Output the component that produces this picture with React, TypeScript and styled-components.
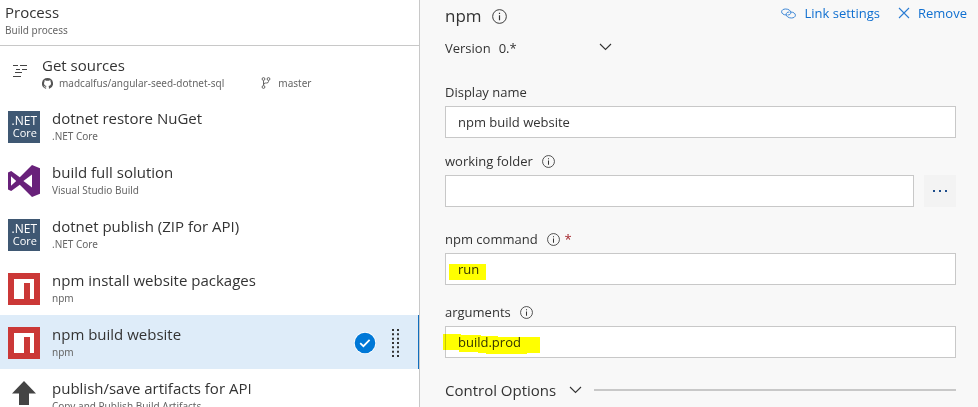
import React from "react";
import styled, { createGlobalStyle } from "styled-components";

const GlobalStyle = createGlobalStyle`
  * { box-sizing: border-box; }
  body { margin: 0; font-family: "Open Sans", "Noto Sans", sans-serif; color: #333; background: #f8f8f8; }
  button, input, select { font: inherit; color: inherit; }
  svg { display: block; flex: none; }
`;

const Layout = styled.div`
  display: grid;
  grid-template-columns: 70fr 93fr;
  height: 100vh;
  overflow: hidden;
`;

const Sidebar = styled.aside`
  background: #fff;
  border-right: 1px solid #c8c8c8;
  overflow: hidden;
`;

const ProcessHeader = styled.header`
  padding: 2px 5px 7px;
  border-bottom: 1px solid #c8c8c8;
`;

const Title = styled.div`
  font-size: 15px;
  line-height: 20px;
  color: #333;
  white-space: nowrap;
`;

const Subtitle = styled.div`
  display: flex;
  align-items: center;
  font-family: "Noto Sans", sans-serif;
  font-size: 10px;
  line-height: 16px;
  color: #666;
  white-space: nowrap;
`;

const Sources = styled.section`
  display: flex;
  gap: 14px;
  padding: 9px 12px 8px;
`;

const SourceIcon = styled.div`
  padding-top: 9px;
`;

const RepoName = styled.span`
  margin: 0 37px 0 6px;
`;

const BranchName = styled.span`
  margin-left: 7px;
`;

const TaskList = styled.ul`
  list-style: none;
  margin: 0;
  padding: 0;
`;

const TaskRow = styled.li<{ $selected?: boolean }>`
  display: flex;
  align-items: center;
  gap: 12px;
  height: 54px;
  padding: 1px 19px 0 8px;
  background: ${(p) => (p.$selected ? "#deecf9" : "#fff")};
  border-right: ${(p) => (p.$selected ? "1px solid #106ebe" : "0")};
`;

const TaskText = styled.div`
  flex: 1;
  min-width: 0;
  padding-bottom: 2px;
`;

const RowTools = styled.div`
  display: flex;
  align-items: center;
  gap: 16px;
`;

const NetBadge = styled.div`
  display: flex;
  flex-direction: column;
  align-items: flex-end;
  justify-content: center;
  width: 32px;
  height: 32px;
  padding-right: 3px;
  background: #3f5873;
  color: #fff;
  line-height: 12px;
`;

const NetName = styled.span`
  font-size: 12px;
`;

const NetCore = styled.span`
  font-size: 11px;
`;

const Details = styled.main`
  min-width: 0;
  padding: 4px 22px 0 25px;
`;

const DetailsHeader = styled.header`
  display: flex;
  align-items: center;
  justify-content: space-between;
  height: 24px;
  margin-right: -11px;
`;

const Heading = styled.h1`
  display: flex;
  align-items: center;
  gap: 10px;
  margin: 0;
  font-size: 17px;
  line-height: 24px;
  font-weight: 400;
`;

const Actions = styled.div`
  display: flex;
  gap: 18px;
  height: 24px;
  padding-bottom: 6px;
`;

const LinkButton = styled.button`
  display: flex;
  align-items: center;
  gap: 8px;
  padding: 0;
  border: 0;
  background: none;
  color: #0f6fd0;
  font-size: 13px;
  line-height: 18px;
  cursor: pointer;
`;

const VersionRow = styled.div`
  display: flex;
  align-items: center;
  gap: 8px;
  margin: 10px 0 24px;
  font-size: 13px;
  line-height: 20px;
`;

const SelectBox = styled.div`
  position: relative;
  width: 113px;
  svg { position: absolute; right: 0; top: 5px; pointer-events: none; }
`;

const Select = styled.select`
  display: block;
  appearance: none;
  width: 100%;
  height: 20px;
  padding: 0;
  border: 0;
  background: none;
`;

const Field = styled.div<{ $gap: number }>`
  margin-bottom: ${(p) => p.$gap}px;
`;

const LabelRow = styled.div`
  display: flex;
  align-items: center;
  gap: 9px;
  margin-bottom: 4px;
  font-size: 13px;
  line-height: 20px;
`;

const Required = styled.span`
  margin-left: -4px;
  color: #a4262c;
`;

const InputLine = styled.div`
  display: flex;
  gap: 10px;
`;

const InputWrap = styled.div`
  position: relative;
  flex: 1;
  min-width: 0;
`;

const TextInput = styled.input`
  display: block;
  width: 100%;
  height: 32px;
  padding: 0 12px;
  border: 1px solid #c8c8c8;
  border-radius: 0;
  background: #fff;
  font-size: 13px;
`;

const Marker = styled.svg`
  position: absolute;
  left: -2px;
  top: 8px;
  mix-blend-mode: multiply;
  pointer-events: none;
`;

const BrowseButton = styled.button`
  display: flex;
  align-items: center;
  justify-content: center;
  width: 32px;
  height: 32px;
  padding: 0;
  border: 0;
  background: #f3f3f3;
`;

const OptionsRow = styled.div`
  display: flex;
  align-items: center;
  gap: 12px;
`;

const OptionsButton = styled.button`
  display: flex;
  align-items: center;
  gap: 13px;
  padding: 0;
  border: 0;
  background: none;
  font-size: 15px;
  line-height: 24px;
`;

const Rule = styled.div`
  flex: 1;
  height: 2px;
  background: #c8c8c8;
`;

const InfoIcon = ({ size = 13 }: { size?: number }) => (
  <svg width={size} height={size} viewBox="0 0 14 14" fill="none" stroke="#333" strokeWidth=".9">
    <circle cx="7" cy="7" r="6.4" />
    <path d="M7 5.8V10.5M7 3.4V4.6" strokeWidth="1.1" />
  </svg>
);

const Chevron = () => (
  <svg width="13" height="8" viewBox="0 0 13 8" fill="none" stroke="#333" strokeWidth="1.1">
    <path d="M1 1L6.5 6.5L12 1" />
  </svg>
);

const SourcesIcon = () => (
  <svg width="16" height="13" viewBox="0 0 16 13" stroke="#444" strokeWidth="1">
    <path d="M1 1.5H6M8 1.5H15M4 5.5H8M10 5.5H15M3 8.5H10M1 12.5H9" />
  </svg>
);

const GithubIcon = () => (
  <svg width="11" height="11" viewBox="0 0 16 16" fill="#555">
    <path d="M8 0a8 8 0 0 0-2.53 15.59c.4.07.55-.17.55-.38v-1.49c-2.01.37-2.53-.49-2.69-.94-.09-.23-.48-.94-.82-1.13-.28-.15-.68-.52-.01-.53.63-.01 1.08.58 1.23.82.72 1.21 1.87.87 2.33.66.07-.52.28-.87.51-1.07-1.78-.2-3.64-.89-3.64-3.95 0-.87.31-1.59.82-2.15-.08-.2-.36-1.02.08-2.12 0 0 .67-.21 2.2.82a7.6 7.6 0 0 1 4 0c1.53-1.04 2.2-.82 2.2-.82.44 1.1.16 1.92.08 2.12.51.56.82 1.27.82 2.15 0 3.07-1.87 3.75-3.65 3.95.29.25.54.73.54 1.48v2.2c0 .21.15.46.55.38A8 8 0 0 0 8 0Z" />
  </svg>
);

const BranchIcon = () => (
  <svg width="10" height="12" viewBox="0 0 10 12" fill="none" stroke="#666" strokeWidth="1">
    <circle cx="2.5" cy="2" r="1.4" />
    <circle cx="7.5" cy="2" r="1.4" />
    <circle cx="2.5" cy="10" r="1.4" />
    <path d="M2.5 3.5V8.5M7.5 3.5V4.5Q7.5 6 5.5 6H4.5Q2.5 6 2.5 8" />
  </svg>
);

const VisualStudioIcon = () => (
  <svg width="32" height="32" viewBox="0 0 32 32">
    <path fill="#68217a" fillRule="evenodd" d="M24 0L32 3.3V28.7L24 32L11.8 19.8L3.2 26L0 24.5V7.5L3.2 6L11.8 12.2ZM24 9.4L15.4 16L24 22.6ZM3 11.3V20.7L8.2 16Z" />
  </svg>
);

const NpmIcon = () => (
  <svg width="32" height="32" viewBox="0 0 32 32">
    <path fill="#cb3837" d="M0 0H32V32H0Z" />
    <path fill="#fff" d="M6 6H26V26H22V10H16V26H6Z" />
  </svg>
);

const PublishIcon = () => (
  <svg width="32" height="32" viewBox="0 0 32 32">
    <path fill="#444" d="M16 0L28 12.5H21V24H11V12.5H4Z" />
  </svg>
);

const NetIcon = () => (
  <NetBadge>
    <NetName>.NET</NetName>
    <NetCore>Core</NetCore>
  </NetBadge>
);

const CheckIcon = () => (
  <svg width="22" height="22" viewBox="0 0 22 22">
    <circle cx="11" cy="11" r="11" fill="#fff" />
    <circle cx="11" cy="11" r="10.3" fill="#0078d7" />
    <path d="M6.2 11.2L9.4 14.2L15.6 7.8" fill="none" stroke="#fff" strokeWidth="1.7" />
  </svg>
);

const GripIcon = () => (
  <svg width="7" height="28" viewBox="0 0 7 28" stroke="#333" strokeWidth="2" strokeDasharray="2 2.33">
    <path d="M1 0V28M6 0V28" />
  </svg>
);

const LinkIcon = () => (
  <svg width="15" height="11" viewBox="0 0 15 11" fill="none" stroke="#2b7cd3" strokeWidth=".9">
    <path d="M5.6 7C2.6 7 .6 5.6.6 3.8C.6 2.2 2.2 1 4.6 1C7.6 1 9.8 2.6 9.8 4.6C9.8 6.2 8.4 7.2 6.6 6.9" />
    <path d="M9.4 4C12.4 4 14.4 5.4 14.4 7.2C14.4 8.8 12.8 10 10.4 10C7.4 10 5.2 8.4 5.2 6.4C5.2 4.8 6.6 3.8 8.4 4.1" />
  </svg>
);

const CloseIcon = () => (
  <svg width="12" height="12" viewBox="0 0 12 12" stroke="#2b7cd3" strokeWidth="1.1">
    <path d="M1 1L11 11M11 1L1 11" />
  </svg>
);

const DotsIcon = () => (
  <svg width="14" height="2" viewBox="0 0 14 2" fill="#1f4e8c">
    <path d="M0 0H2V2H0ZM6 0H8V2H6ZM12 0H14V2H12Z" />
  </svg>
);

const tasks = [
  { title: "dotnet restore NuGet", kind: ".NET Core", Icon: NetIcon },
  { title: "build full solution", kind: "Visual Studio Build", Icon: VisualStudioIcon },
  { title: "dotnet publish (ZIP for API)", kind: ".NET Core", Icon: NetIcon },
  { title: "npm install website packages", kind: "npm", Icon: NpmIcon },
  { title: "npm build website", kind: "npm", Icon: NpmIcon, selected: true },
  { title: "publish/save artifacts for API", kind: "Copy and Publish Build Artifacts", Icon: PublishIcon },
];

export default function App() {
  return (
    <>
      <GlobalStyle />
      <Layout>
        <Sidebar>
          <ProcessHeader>
            <Title>Process</Title>
            <Subtitle>Build process</Subtitle>
          </ProcessHeader>
          <Sources>
            <SourceIcon>
              <SourcesIcon />
            </SourceIcon>
            <div>
              <Title>Get sources</Title>
              <Subtitle>
                <GithubIcon />
                <RepoName>madcalfus/angular-seed-dotnet-sql</RepoName>
                <BranchIcon />
                <BranchName>master</BranchName>
              </Subtitle>
            </div>
          </Sources>
          <TaskList>
            {tasks.map(({ title, kind, Icon, selected }) => (
              <TaskRow key={title} $selected={selected}>
                <Icon />
                <TaskText>
                  <Title>{title}</Title>
                  <Subtitle>{kind}</Subtitle>
                </TaskText>
                {selected && (
                  <RowTools>
                    <CheckIcon />
                    <GripIcon />
                  </RowTools>
                )}
              </TaskRow>
            ))}
          </TaskList>
        </Sidebar>
        <Details>
          <DetailsHeader>
            <Heading>
              npm <InfoIcon size={15} />
            </Heading>
            <Actions>
              <LinkButton type="button">
                <LinkIcon />
                Link settings
              </LinkButton>
              <LinkButton type="button">
                <CloseIcon />
                Remove
              </LinkButton>
            </Actions>
          </DetailsHeader>
          <VersionRow>
            <label htmlFor="version">Version</label>
            <SelectBox>
              <Select id="version" defaultValue="0">
                <option value="0">0.*</option>
              </Select>
              <Chevron />
            </SelectBox>
          </VersionRow>
          <Field $gap={13}>
            <LabelRow>
              <label htmlFor="display-name">Display name</label>
            </LabelRow>
            <TextInput id="display-name" defaultValue="npm build website" />
          </Field>
          <Field $gap={22}>
            <LabelRow>
              <label htmlFor="folder">working folder</label>
              <InfoIcon />
            </LabelRow>
            <InputLine>
              <InputWrap>
                <TextInput id="folder" />
              </InputWrap>
              <BrowseButton type="button" aria-label="Browse">
                <DotsIcon />
              </BrowseButton>
            </InputLine>
          </Field>
          <Field $gap={17}>
            <LabelRow>
              <label htmlFor="command">npm command</label>
              <InfoIcon />
              <Required>*</Required>
            </LabelRow>
            <InputWrap>
              <TextInput id="command" defaultValue="run" required />
              <Marker width="97" height="20" viewBox="0 0 97 20">
                <path fill="#ff0" d="M6 3H43V19H6Z" />
              </Marker>
            </InputWrap>
          </Field>
          <Field $gap={20}>
            <LabelRow>
              <label htmlFor="arguments">arguments</label>
              <InfoIcon />
            </LabelRow>
            <InputWrap>
              <TextInput id="arguments" defaultValue="build.prod" />
              <Marker width="97" height="20" viewBox="0 0 97 20">
                <path fill="#ff0" d="M0 0H18V1H38V2H55V3H97V19H84V20H43V19H35V18H16V16H0Z" />
              </Marker>
            </InputWrap>
          </Field>
          <OptionsRow>
            <OptionsButton type="button">
              Control Options <Chevron />
            </OptionsButton>
            <Rule />
          </OptionsRow>
        </Details>
      </Layout>
    </>
  );
}
